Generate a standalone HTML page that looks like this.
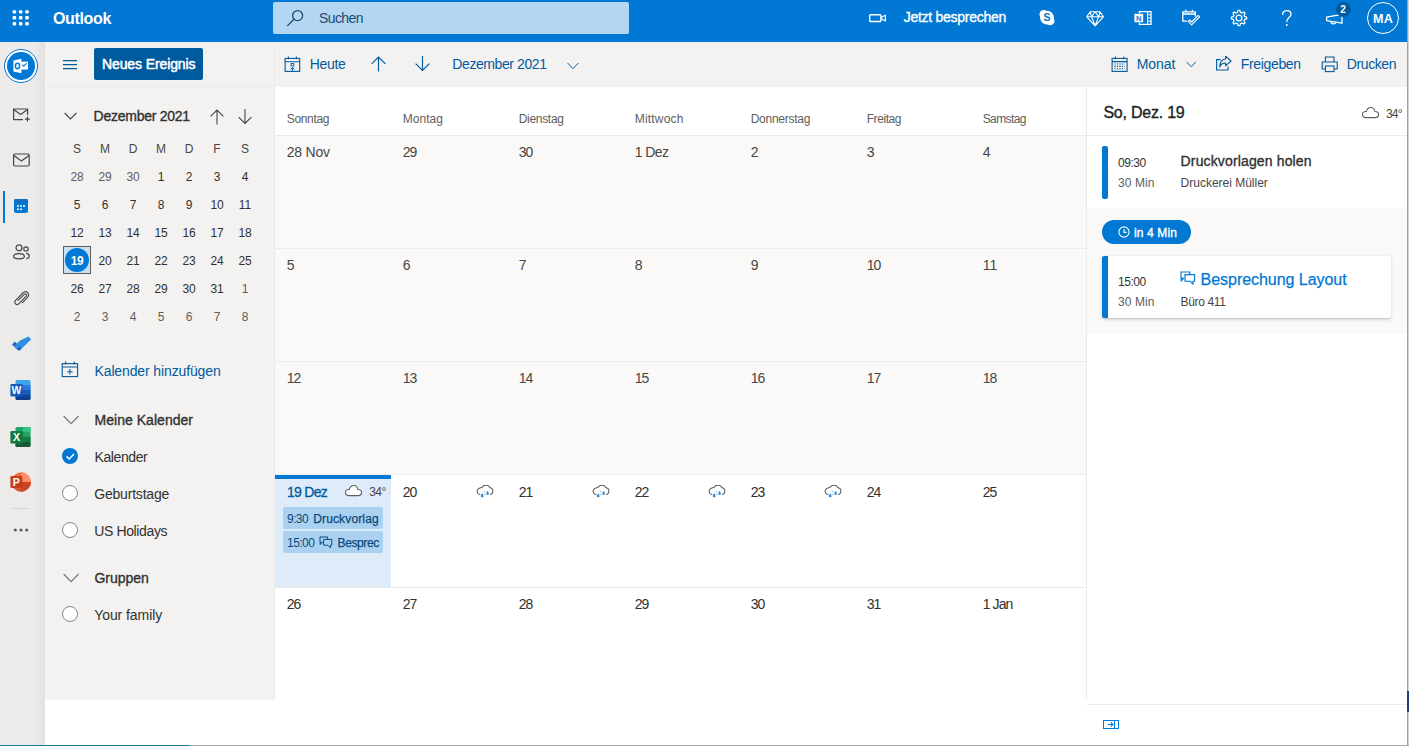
<!DOCTYPE html>
<html lang="de"><head><meta charset="utf-8"><title>Kalender - Outlook</title>
<style>
*{box-sizing:border-box;margin:0;padding:0}
html,body{width:1409px;height:746px;overflow:hidden;background:#fff}
body{font-family:"Liberation Sans",sans-serif;position:relative;color:#323130}
.a{position:absolute}
.t{position:absolute;white-space:nowrap;line-height:20px}
.sb{-webkit-text-stroke:0.35px currentColor}
svg{position:absolute;overflow:visible}
</style></head>
<body>
<div class="a" style="left:0px;top:0px;width:1407px;height:42px;background:#0078d4;"></div>
<div class="a" style="left:0px;top:42px;width:45px;height:703px;background:#edebe9;"></div>
<div class="a" style="left:35px;top:42px;width:10px;height:703px;background:linear-gradient(to right,rgba(0,0,0,0),rgba(0,0,0,0.045))"></div>
<div class="a" style="left:45px;top:42px;width:230px;height:658px;background:#f3f2f1;"></div>
<div class="a" style="left:275px;top:42px;width:1132px;height:45px;background:#f3f2f1;"></div>
<div class="a" style="left:46px;top:86px;width:229px;height:1px;background:#edebe9;"></div>
<div class="a" style="left:274px;top:42px;width:1px;height:658px;background:#edebe9;"></div>
<div class="a" style="left:1407px;top:0px;width:1px;height:746px;background:#a0a0a0;"></div>
<div class="a" style="left:1408px;top:0px;width:1px;height:746px;background:#d2d2d2;"></div>
<div class="a" style="left:0px;top:745px;width:1409px;height:1px;background:#a6a6a6;"></div>
<div class="a" style="left:0px;top:745px;width:190px;height:1px;background:#1a7aa3;"></div>
<div class="a" style="left:1407px;top:691px;width:2px;height:21px;background:#1f3f7a;"></div>
<svg style="left:0px;top:0px" width="46" height="42" viewBox="0 0 46 42"><rect x="12.6" y="10.2" width="3.6" height="3.4" rx="1" fill="#fff"/><rect x="18.9" y="10.2" width="3.6" height="3.4" rx="1" fill="#fff"/><rect x="25.2" y="10.2" width="3.6" height="3.4" rx="1" fill="#fff"/><rect x="12.6" y="16.1" width="3.6" height="3.4" rx="1" fill="#fff"/><rect x="18.9" y="16.1" width="3.6" height="3.4" rx="1" fill="#fff"/><rect x="25.2" y="16.1" width="3.6" height="3.4" rx="1" fill="#fff"/><rect x="12.6" y="22.0" width="3.6" height="3.4" rx="1" fill="#fff"/><rect x="18.9" y="22.0" width="3.6" height="3.4" rx="1" fill="#fff"/><rect x="25.2" y="22.0" width="3.6" height="3.4" rx="1" fill="#fff"/></svg>
<div class="t" style="left:53px;top:9px;font-size:16px;color:#fff;font-weight:bold;letter-spacing:-0.343px;">Outlook</div>
<div class="a" style="left:273px;top:2px;width:356px;height:32px;background:#b3d6f2;border-radius:2px"></div>
<svg style="left:285px;top:8px" width="20" height="20" viewBox="0 0 20 20"><circle cx="12.6" cy="7.6" r="5" fill="none" stroke="#1f4a75" stroke-width="1.3"/><path d="M9 11.3 L2.6 17.6" stroke="#1f4a75" stroke-width="1.3" fill="none" stroke-linecap="round"/></svg>
<div class="t" style="left:319.1px;top:8px;font-size:14px;color:#1f4a75;letter-spacing:-0.633px;">Suchen</div>
<svg style="left:868px;top:12px" width="20" height="12" viewBox="0 0 20 12"><rect x="1.7" y="2.7" width="11.2" height="6.8" rx="0.8" fill="none" stroke="#fff" stroke-width="1.4"/><path d="M13.6 5.2 L17.4 3.2 L17.4 9 L13.6 7 Z" fill="none" stroke="#fff" stroke-width="1.2" stroke-linejoin="round"/></svg>
<div class="t sb" style="left:903.7px;top:7px;font-size:14px;color:#fff;letter-spacing:-0.273px;">Jetzt besprechen</div>
<svg style="left:1037px;top:8px" width="20" height="20" viewBox="0 0 20 20"><circle cx="10" cy="9.6" r="6.9" fill="#fff"/><circle cx="6.9" cy="6.3" r="4.4" fill="#fff"/><circle cx="13.1" cy="12.9" r="4.4" fill="#fff"/><text x="10" y="13.4" font-family="Liberation Sans" font-weight="bold" font-size="10.5" fill="#0078d4" text-anchor="middle">S</text></svg>
<svg style="left:1086px;top:10px" width="18" height="17" viewBox="0 0 18 17"><path d="M4.2 1.8 L14 1.8 L17.4 6.8 L9.1 15.8 L0.8 6.8 Z M0.8 6.8 H17.4 M5.6 6.8 L9.1 15.8 L12.6 6.8 M4.2 1.8 L5.6 6.8 M14 1.8 L12.6 6.8 M9.1 1.8 L5.6 6.8 M9.1 1.8 L12.6 6.8" fill="none" stroke="#fff" stroke-width="1.1" stroke-linejoin="round"/></svg>
<svg style="left:1133px;top:9px" width="20" height="18" viewBox="0 0 20 18"><path d="M6.4 4.6 V2.6 H18 V15.4 H6.4 V13.4" fill="none" stroke="#fff" stroke-width="1.3"/><path d="M14.6 2.6 V15.4 M14.6 5.8 H18 M14.6 9 H18 M14.6 12.2 H18" stroke="#fff" stroke-width="1.1" fill="none"/><rect x="1.4" y="4.8" width="8.8" height="8.4" fill="#fff"/><text x="5.8" y="11.9" font-family="Liberation Sans" font-weight="bold" font-size="7.6" fill="#0078d4" text-anchor="middle">N</text></svg>
<svg style="left:1182px;top:9px" width="20" height="18" viewBox="0 0 20 18"><path d="M13.4 7.6 V2.8 H0.8 V12.2 H5" fill="none" stroke="#fff" stroke-width="1.3" stroke-linejoin="round"/><path d="M0.8 5 H13.4 M3.8 0.8 V3 M10.4 0.8 V3" stroke="#fff" stroke-width="1.3" fill="none"/><path d="M6.2 12.4 L9.6 15.8 L17.6 7.8 L16.2 6.4 L9.6 13 L7.6 11 Z" fill="none" stroke="#fff" stroke-width="1.1" stroke-linejoin="round"/></svg>
<svg style="left:1229px;top:8px" width="20" height="20" viewBox="0 0 20 20"><path d="M9.03 2.36 L10.97 2.36 L11.40 4.37 L12.99 5.03 L14.72 3.92 L16.08 5.28 L14.97 7.01 L15.63 8.60 L17.64 9.03 L17.64 10.97 L15.63 11.40 L14.97 12.99 L16.08 14.72 L14.72 16.08 L12.99 14.97 L11.40 15.63 L10.97 17.64 L9.03 17.64 L8.60 15.63 L7.01 14.97 L5.28 16.08 L3.92 14.72 L5.03 12.99 L4.37 11.40 L2.36 10.97 L2.36 9.03 L4.37 8.60 L5.03 7.01 L3.92 5.28 L5.28 3.92 L7.01 5.03 L8.60 4.37 Z" fill="none" stroke="#fff" stroke-width="1.25" stroke-linejoin="round"/><circle cx="10" cy="10" r="2.9" fill="none" stroke="#fff" stroke-width="1.25"/></svg>
<svg style="left:1280px;top:8px" width="14" height="20" viewBox="0 0 14 20"><path d="M2.6 6.4 C2.6 3.6 4.6 2.6 6.8 2.6 C9.2 2.6 11 4 11 6.2 C11 9.4 6.8 9.6 6.8 13.6" fill="none" stroke="#fff" stroke-width="1.35" stroke-linecap="round"/><circle cx="6.8" cy="17" r="0.95" fill="#fff"/></svg>
<svg style="left:1325px;top:12px" width="22" height="14" viewBox="0 0 22 14"><path d="M1.6 5.2 L17 2.4 L17 11.2 L1.6 8.6 Z" fill="none" stroke="#fff" stroke-width="1.3" stroke-linejoin="round"/><path d="M6 9.4 C6 12.4 10.6 12.6 10.8 10.2" fill="none" stroke="#fff" stroke-width="1.3"/></svg>
<div class="a" style="left:1335.6px;top:1.8px;width:15px;height:15px;border-radius:50%;background:#005a9e"></div>
<div class="t" style="left:1243.1px;width:200px;text-align:center;top:0px;font-size:10px;color:#fff;font-weight:bold;">2</div>
<div class="a" style="left:1367px;top:2px;width:32px;height:32px;border-radius:50%;border:1.5px solid #fff"></div>
<div class="t" style="left:1283px;width:200px;text-align:center;top:9px;font-size:12.6px;color:#fff;font-weight:bold;letter-spacing:0.2px;">MA</div>
<div class="a" style="left:4px;top:49px;width:34px;height:34px;border-radius:50%;border:1.5px solid #0078d4;background:#fff"></div>
<div class="a" style="left:7px;top:52px;width:28px;height:28px;border-radius:50%;background:#0078d4"></div>
<svg style="left:11px;top:56px" width="20" height="20" viewBox="0 0 20 20"><path d="M9.6 5.6 H17 V13.6 H9.6 Z" fill="#fff"/><path d="M11.2 8.6 L12.8 10.2 L15.8 7.2" fill="none" stroke="#0078d4" stroke-width="1.1"/><path d="M2.4 4.4 L10.4 2.8 V17.2 L2.4 15.6 Z" fill="#fff"/><ellipse cx="6.5" cy="10" rx="2.1" ry="2.7" fill="none" stroke="#0078d4" stroke-width="1.5"/></svg>
<svg style="left:12px;top:106px" width="20" height="18" viewBox="0 0 20 18"><path d="M15.6 9 V3 H1.6 V13.6 H11" fill="none" stroke="#484644" stroke-width="1.2" stroke-linejoin="round"/><path d="M1.6 3.6 L8.6 8.6 L15.6 3.6" fill="none" stroke="#484644" stroke-width="1.2"/><path d="M15.4 10.6 V15.6 M12.9 13.1 H17.9" stroke="#484644" stroke-width="1.2" fill="none"/></svg>
<svg style="left:12px;top:152px" width="20" height="16" viewBox="0 0 20 16"><rect x="1.6" y="2" width="15.6" height="12" rx="1.2" fill="none" stroke="#484644" stroke-width="1.2"/><path d="M1.8 3.4 L9.4 9 L17 3.4" fill="none" stroke="#484644" stroke-width="1.2"/></svg>
<div class="a" style="left:3px;top:191px;width:2px;height:32px;background:#0078d4;"></div>
<svg style="left:13px;top:198px" width="16" height="16" viewBox="0 0 16 16"><rect x="1" y="1" width="14" height="14" rx="2" fill="#0078d4"/><rect x="1" y="1" width="14" height="3.6" rx="1.6" fill="#106ebe"/><g fill="#fff"><circle cx="5" cy="8" r="1"/><circle cx="8" cy="8" r="1"/><circle cx="11" cy="8" r="1"/><circle cx="5" cy="11.2" r="1"/><circle cx="8" cy="11.2" r="1"/></g></svg>
<svg style="left:12px;top:243px" width="20" height="18" viewBox="0 0 20 18"><circle cx="7" cy="4.8" r="3" fill="none" stroke="#484644" stroke-width="1.2"/><path d="M1.6 13.6 C1.6 9.6 12.4 9.6 12.4 13.6 C12.4 16.6 1.6 16.6 1.6 13.6 Z" fill="none" stroke="#484644" stroke-width="1.2"/><circle cx="14" cy="6" r="2.2" fill="none" stroke="#484644" stroke-width="1.2"/><path d="M14 10.4 C18 10.4 18.4 15.6 14.4 15.6" fill="none" stroke="#484644" stroke-width="1.2"/></svg>
<svg style="left:12px;top:289px" width="20" height="18" viewBox="0 0 20 18"><path d="M6.2 11.4 L12.2 5.4 C13.6 4 15.4 6 14.2 7.2 L7 14.6 C4.6 17 1.2 13.8 3.6 11.4 L10.8 4 C14.4 0.6 18.8 5.2 15.6 8.4 L10.4 13.6" fill="none" stroke="#484644" stroke-width="1.15" stroke-linecap="round"/></svg>
<svg style="left:11px;top:335px" width="22" height="18" viewBox="0 0 22 18"><path d="M1 9.4 L3.8 6.6 L8.6 11.4 L5.8 14.2 Z" fill="#2b62c6"/><path d="M5.8 14.2 L3 11.4 L8.6 5.8 L17.4 1.4 L20.2 4.2 L8.6 15.8 Z" fill="#2f8fe4"/><path d="M5.8 14.2 L8.6 11.4 L10.2 13 L8.6 15.8 Z" fill="#1e5fc0"/></svg>
<svg style="left:10px;top:379px" width="21" height="22" viewBox="0 0 21 22"><rect x="5.5" y="1" width="15" height="20" rx="1.6" fill="#41a5ee"/><rect x="5.5" y="6" width="15" height="5" fill="#2b7cd3"/><rect x="5.5" y="11" width="15" height="5" fill="#185abd"/><path d="M5.5 16 H20.5 V19.4 A1.6 1.6 0 0 1 18.9 21 H7.1 A1.6 1.6 0 0 1 5.5 19.4Z" fill="#103f91"/><rect x="0.4" y="5" width="12.4" height="12.4" rx="1.2" fill="#185abd"/><text x="6.5" y="14.9" font-family="Liberation Sans" font-weight="bold" font-size="10.4" fill="#fff" text-anchor="middle">W</text></svg>
<svg style="left:10px;top:426px" width="21" height="22" viewBox="0 0 21 22"><rect x="5.5" y="1" width="15" height="20" rx="1.6" fill="#21a366"/><rect x="13" y="1" width="7.5" height="5" fill="#33c481"/><rect x="5.5" y="6" width="7.5" height="5" fill="#107c41"/><rect x="13" y="11" width="7.5" height="5" fill="#107c41"/><path d="M5.5 16 H20.5 V19.4 A1.6 1.6 0 0 1 18.9 21 H7.1 A1.6 1.6 0 0 1 5.5 19.4Z" fill="#185c37"/><rect x="0.4" y="5" width="12.4" height="12.4" rx="1.2" fill="#107c41"/><text x="6.5" y="15" font-family="Liberation Sans" font-weight="bold" font-size="10.8" fill="#fff" text-anchor="middle">X</text></svg>
<svg style="left:10px;top:472px" width="22" height="22" viewBox="0 0 22 22"><circle cx="11.2" cy="10" r="9.7" fill="#ed6c47"/><path d="M11.2 0.3 A9.7 9.7 0 0 1 20.9 10 H11.2 Z" fill="#ff8f6b"/><path d="M1.5 10 A9.7 9.7 0 0 0 20.9 10 Z" fill="#d35230"/><path d="M11.2 10 H20.9 A9.7 9.7 0 0 1 11.2 19.7 Z" fill="#c43e1c" opacity="0.55"/><rect x="0.4" y="4" width="12" height="12" rx="1.2" fill="#c43e1c"/><text x="6.4" y="13.9" font-family="Liberation Sans" font-weight="bold" font-size="10.6" fill="#fff" text-anchor="middle">P</text></svg>
<div class="a" style="left:13px;top:508px;width:16px;height:1px;background:#d2d0ce;"></div>
<svg style="left:12px;top:525.5px" width="20" height="8" viewBox="0 0 20 8"><circle cx="3.3" cy="4" r="1.55" fill="#605e5c"/><circle cx="9" cy="4" r="1.55" fill="#605e5c"/><circle cx="14.7" cy="4" r="1.55" fill="#605e5c"/></svg>
<svg style="left:62px;top:58px" width="18" height="14" viewBox="0 0 18 14"><path d="M1 2.6 H15 M1 6.6 H15 M1 10.6 H15" stroke="#005a9e" stroke-width="1.1" fill="none"/></svg>
<div class="a" style="left:94px;top:48px;width:109px;height:32px;background:#005a9e;border-radius:2px"></div>
<div class="t" style="left:102px;top:54px;font-size:14px;color:#fff;-webkit-text-stroke:0.5px #fff;letter-spacing:-0.109px;">Neues Ereignis</div>
<svg style="left:63.5px;top:112px" width="13" height="9" viewBox="0 0 13 9"><path d="M0.6 1 L6.5 7 L12.4 1" fill="none" stroke="#484644" stroke-width="1.1"/></svg>
<div class="t sb" style="left:93.6px;top:106px;font-size:14px;color:#323130;letter-spacing:-0.258px;">Dezember 2021</div>
<svg style="left:210.0px;top:108.5px" width="14" height="15.5" viewBox="0 0 14 15.5"><path d="M7.0 15.5 V1 M0.6 7.4 L7.0 1 L13.4 7.4" fill="none" stroke="#484644" stroke-width="1.1"/></svg>
<svg style="left:237.7px;top:108.5px" width="14" height="15.5" viewBox="0 0 14 15.5"><path d="M7.0 0 V14.5 M0.6 8.1 L7.0 14.5 L13.4 8.1" fill="none" stroke="#484644" stroke-width="1.1"/></svg>
<div class="t" style="left:-23px;width:200px;text-align:center;top:139px;font-size:12px;color:#484644;">S</div>
<div class="t" style="left:5px;width:200px;text-align:center;top:139px;font-size:12px;color:#484644;">M</div>
<div class="t" style="left:33px;width:200px;text-align:center;top:139px;font-size:12px;color:#484644;">D</div>
<div class="t" style="left:61px;width:200px;text-align:center;top:139px;font-size:12px;color:#484644;">M</div>
<div class="t" style="left:89px;width:200px;text-align:center;top:139px;font-size:12px;color:#484644;">D</div>
<div class="t" style="left:117px;width:200px;text-align:center;top:139px;font-size:12px;color:#484644;">F</div>
<div class="t" style="left:145px;width:200px;text-align:center;top:139px;font-size:12px;color:#484644;">S</div>
<div class="t" style="left:-23px;width:200px;text-align:center;top:167px;font-size:12px;color:#605e5c;letter-spacing:-0.1px;">28</div>
<div class="t" style="left:5px;width:200px;text-align:center;top:167px;font-size:12px;color:#605e5c;letter-spacing:-0.1px;">29</div>
<div class="t" style="left:33px;width:200px;text-align:center;top:167px;font-size:12px;color:#605e5c;letter-spacing:-0.1px;">30</div>
<div class="t" style="left:61px;width:200px;text-align:center;top:167px;font-size:12px;color:#323130;letter-spacing:-0.1px;">1</div>
<div class="t" style="left:89px;width:200px;text-align:center;top:167px;font-size:12px;color:#323130;letter-spacing:-0.1px;">2</div>
<div class="t" style="left:117px;width:200px;text-align:center;top:167px;font-size:12px;color:#323130;letter-spacing:-0.1px;">3</div>
<div class="t" style="left:145px;width:200px;text-align:center;top:167px;font-size:12px;color:#323130;letter-spacing:-0.1px;">4</div>
<div class="t" style="left:-23px;width:200px;text-align:center;top:195px;font-size:12px;color:#323130;letter-spacing:-0.1px;">5</div>
<div class="t" style="left:5px;width:200px;text-align:center;top:195px;font-size:12px;color:#323130;letter-spacing:-0.1px;">6</div>
<div class="t" style="left:33px;width:200px;text-align:center;top:195px;font-size:12px;color:#323130;letter-spacing:-0.1px;">7</div>
<div class="t" style="left:61px;width:200px;text-align:center;top:195px;font-size:12px;color:#323130;letter-spacing:-0.1px;">8</div>
<div class="t" style="left:89px;width:200px;text-align:center;top:195px;font-size:12px;color:#323130;letter-spacing:-0.1px;">9</div>
<div class="t" style="left:117px;width:200px;text-align:center;top:195px;font-size:12px;color:#323130;letter-spacing:-0.1px;">10</div>
<div class="t" style="left:145px;width:200px;text-align:center;top:195px;font-size:12px;color:#323130;letter-spacing:-0.1px;">11</div>
<div class="t" style="left:-23px;width:200px;text-align:center;top:223px;font-size:12px;color:#323130;letter-spacing:-0.1px;">12</div>
<div class="t" style="left:5px;width:200px;text-align:center;top:223px;font-size:12px;color:#323130;letter-spacing:-0.1px;">13</div>
<div class="t" style="left:33px;width:200px;text-align:center;top:223px;font-size:12px;color:#323130;letter-spacing:-0.1px;">14</div>
<div class="t" style="left:61px;width:200px;text-align:center;top:223px;font-size:12px;color:#323130;letter-spacing:-0.1px;">15</div>
<div class="t" style="left:89px;width:200px;text-align:center;top:223px;font-size:12px;color:#323130;letter-spacing:-0.1px;">16</div>
<div class="t" style="left:117px;width:200px;text-align:center;top:223px;font-size:12px;color:#323130;letter-spacing:-0.1px;">17</div>
<div class="t" style="left:145px;width:200px;text-align:center;top:223px;font-size:12px;color:#323130;letter-spacing:-0.1px;">18</div>
<div class="a" style="left:63px;top:246px;width:28px;height:28px;background:#c7e0f4;border:1px solid #605e5c"></div>
<div class="a" style="left:65px;top:248px;width:24px;height:24px;border-radius:50%;background:#0078d4"></div>
<div class="t" style="left:-23px;width:200px;text-align:center;top:251px;font-size:12px;color:#fff;font-weight:bold;letter-spacing:-0.4px;">19</div>
<div class="t" style="left:5px;width:200px;text-align:center;top:251px;font-size:12px;color:#323130;letter-spacing:-0.1px;">20</div>
<div class="t" style="left:33px;width:200px;text-align:center;top:251px;font-size:12px;color:#323130;letter-spacing:-0.1px;">21</div>
<div class="t" style="left:61px;width:200px;text-align:center;top:251px;font-size:12px;color:#323130;letter-spacing:-0.1px;">22</div>
<div class="t" style="left:89px;width:200px;text-align:center;top:251px;font-size:12px;color:#323130;letter-spacing:-0.1px;">23</div>
<div class="t" style="left:117px;width:200px;text-align:center;top:251px;font-size:12px;color:#323130;letter-spacing:-0.1px;">24</div>
<div class="t" style="left:145px;width:200px;text-align:center;top:251px;font-size:12px;color:#323130;letter-spacing:-0.1px;">25</div>
<div class="t" style="left:-23px;width:200px;text-align:center;top:279px;font-size:12px;color:#323130;letter-spacing:-0.1px;">26</div>
<div class="t" style="left:5px;width:200px;text-align:center;top:279px;font-size:12px;color:#323130;letter-spacing:-0.1px;">27</div>
<div class="t" style="left:33px;width:200px;text-align:center;top:279px;font-size:12px;color:#323130;letter-spacing:-0.1px;">28</div>
<div class="t" style="left:61px;width:200px;text-align:center;top:279px;font-size:12px;color:#323130;letter-spacing:-0.1px;">29</div>
<div class="t" style="left:89px;width:200px;text-align:center;top:279px;font-size:12px;color:#323130;letter-spacing:-0.1px;">30</div>
<div class="t" style="left:117px;width:200px;text-align:center;top:279px;font-size:12px;color:#323130;letter-spacing:-0.1px;">31</div>
<div class="t" style="left:145px;width:200px;text-align:center;top:279px;font-size:12px;color:#605e5c;letter-spacing:-0.1px;">1</div>
<div class="t" style="left:-23px;width:200px;text-align:center;top:307px;font-size:12px;color:#605e5c;letter-spacing:-0.1px;">2</div>
<div class="t" style="left:5px;width:200px;text-align:center;top:307px;font-size:12px;color:#605e5c;letter-spacing:-0.1px;">3</div>
<div class="t" style="left:33px;width:200px;text-align:center;top:307px;font-size:12px;color:#605e5c;letter-spacing:-0.1px;">4</div>
<div class="t" style="left:61px;width:200px;text-align:center;top:307px;font-size:12px;color:#605e5c;letter-spacing:-0.1px;">5</div>
<div class="t" style="left:89px;width:200px;text-align:center;top:307px;font-size:12px;color:#605e5c;letter-spacing:-0.1px;">6</div>
<div class="t" style="left:117px;width:200px;text-align:center;top:307px;font-size:12px;color:#605e5c;letter-spacing:-0.1px;">7</div>
<div class="t" style="left:145px;width:200px;text-align:center;top:307px;font-size:12px;color:#605e5c;letter-spacing:-0.1px;">8</div>
<svg style="left:61px;top:361px" width="18" height="17" viewBox="0 0 18 17"><rect x="1.2" y="2.6" width="15.4" height="13" fill="none" stroke="#005a9e" stroke-width="1.1"/><path d="M1.2 6 H16.6 M4.6 0.6 V3.4 M13.2 0.6 V3.4 M8.9 8 V13.6 M6.1 10.8 H11.7" stroke="#005a9e" stroke-width="1.1" fill="none"/></svg>
<div class="t" style="left:94.5px;top:361px;font-size:14px;color:#005a9e;letter-spacing:-0.123px;">Kalender hinzufügen</div>
<svg style="left:62.8px;top:414.8px" width="16.2" height="10.6" viewBox="0 0 16.2 10.6"><path d="M0.6 1 L8.1 8.6 L15.6 1" fill="none" stroke="#797775" stroke-width="1.2"/></svg>
<div class="t sb" style="left:94.5px;top:410px;font-size:14px;color:#323130;letter-spacing:0.035px;">Meine Kalender</div>
<div class="a" style="left:62px;top:448px;width:16.4px;height:16.4px;border-radius:50%;background:#0078d4"></div>
<svg style="left:62px;top:448px" width="17" height="17" viewBox="0 0 17 17"><path d="M4.6 8.4 L7.2 11 L12 6" fill="none" stroke="#fff" stroke-width="1.5"/></svg>
<div class="t" style="left:94.5px;top:447px;font-size:14px;color:#323130;letter-spacing:-0.403px;">Kalender</div>
<div class="a" style="left:62px;top:485px;width:16px;height:16px;border-radius:50%;background:#fff;border:1px solid #8a8886"></div>
<div class="t" style="left:94.2px;top:484px;font-size:14px;color:#323130;letter-spacing:-0.193px;">Geburtstage</div>
<div class="a" style="left:62px;top:522.4px;width:16px;height:16px;border-radius:50%;background:#fff;border:1px solid #8a8886"></div>
<div class="t" style="left:94.2px;top:521px;font-size:14px;color:#323130;letter-spacing:-0.371px;">US Holidays</div>
<svg style="left:62.8px;top:573.3px" width="16.2" height="10.6" viewBox="0 0 16.2 10.6"><path d="M0.6 1 L8.1 8.6 L15.6 1" fill="none" stroke="#797775" stroke-width="1.2"/></svg>
<div class="t sb" style="left:94.5px;top:568px;font-size:14px;color:#323130;letter-spacing:-0.044px;">Gruppen</div>
<div class="a" style="left:62px;top:606px;width:16px;height:16px;border-radius:50%;background:#fff;border:1px solid #8a8886"></div>
<div class="t" style="left:94.2px;top:605px;font-size:14px;color:#323130;letter-spacing:-0.072px;">Your family</div>
<svg style="left:284px;top:55.5px" width="17" height="17" viewBox="0 0 17 17"><rect x="1.1" y="2.4" width="14.6" height="13" fill="none" stroke="#005a9e" stroke-width="1.1"/><path d="M1.1 5.8 H15.7 M4.4 0.6 V3.2 M12.4 0.6 V3.2" stroke="#005a9e" stroke-width="1.1" fill="none"/><rect x="7" y="7.6" width="2.8" height="2.4" fill="none" stroke="#005a9e" stroke-width="0.9"/><path d="M8.4 15.4 V11.6 M6.4 13.4 L8.4 11.4 L10.4 13.4" stroke="#005a9e" stroke-width="1" fill="none"/></svg>
<div class="t" style="left:309.8px;top:54px;font-size:14px;color:#005a9e;letter-spacing:-0.360px;">Heute</div>
<svg style="left:371.1px;top:56px" width="15" height="15.5" viewBox="0 0 15 15.5"><path d="M7.5 15.5 V1 M0.6 7.9 L7.5 1 L14.4 7.9" fill="none" stroke="#005a9e" stroke-width="1.15"/></svg>
<svg style="left:415.0px;top:56px" width="15" height="15.5" viewBox="0 0 15 15.5"><path d="M7.5 0 V14.5 M0.6 7.6 L7.5 14.5 L14.4 7.6" fill="none" stroke="#005a9e" stroke-width="1.15"/></svg>
<div class="t" style="left:452.3px;top:54px;font-size:14px;color:#005a9e;letter-spacing:-0.408px;">Dezember 2021</div>
<svg style="left:567px;top:61.9px" width="12" height="8.6" viewBox="0 0 12 8.6"><path d="M0.6 1 L6.0 6.6 L11.4 1" fill="none" stroke="#005a9e" stroke-width="1.0"/></svg>
<svg style="left:1111px;top:55.5px" width="18" height="17" viewBox="0 0 18 17"><rect x="1.1" y="2.4" width="15" height="13" fill="none" stroke="#005a9e" stroke-width="1.1"/><path d="M1.1 5.6 H16.1 M4.4 0.6 V3.2 M12.8 0.6 V3.2" stroke="#005a9e" stroke-width="1.1" fill="none"/><path d="M3.4 8 H13.8 M3.4 10.4 H13.8 M3.4 12.8 H13.8" stroke="#005a9e" stroke-width="1.1" stroke-dasharray="1.3 1.2" fill="none"/></svg>
<div class="t" style="left:1136.7px;top:54px;font-size:14px;color:#005a9e;letter-spacing:-0.023px;">Monat</div>
<svg style="left:1185.5px;top:60.7px" width="10.4" height="7.8" viewBox="0 0 10.4 7.8"><path d="M0.6 1 L5.2 5.8 L9.8 1" fill="none" stroke="#005a9e" stroke-width="1.0"/></svg>
<svg style="left:1215px;top:55px" width="18" height="17" viewBox="0 0 18 17"><path d="M5.6 4.6 H1.6 V15 H13 V11.6" fill="none" stroke="#005a9e" stroke-width="1.1"/><path d="M10.6 1.2 L16 6 L10.6 10.8 V8 C7.4 8 5.6 9.6 4.8 12 C4.8 7.6 7 4.4 10.6 4 Z" fill="none" stroke="#005a9e" stroke-width="1.1" stroke-linejoin="round"/></svg>
<div class="t" style="left:1240.7px;top:54px;font-size:14px;color:#005a9e;letter-spacing:-0.328px;">Freigeben</div>
<svg style="left:1321px;top:55.5px" width="18" height="17" viewBox="0 0 18 17"><path d="M4.4 6 V1 H13 V6" fill="none" stroke="#005a9e" stroke-width="1.1"/><path d="M4.4 13 H1.2 V6 H16.2 V13 H13" fill="none" stroke="#005a9e" stroke-width="1.1"/><rect x="4.4" y="10" width="8.6" height="5.6" fill="none" stroke="#005a9e" stroke-width="1.1"/></svg>
<div class="t" style="left:1346.8px;top:54px;font-size:14px;color:#005a9e;letter-spacing:-0.402px;">Drucken</div>
<div class="a" style="left:275px;top:136px;width:812px;height:339px;background:#faf9f8;"></div>
<div class="a" style="left:275px;top:135px;width:812px;height:1px;background:#edebe9;"></div>
<div class="a" style="left:275px;top:248px;width:812px;height:1px;background:#edebe9;"></div>
<div class="a" style="left:275px;top:361px;width:812px;height:1px;background:#edebe9;"></div>
<div class="a" style="left:275px;top:474px;width:812px;height:1px;background:#edebe9;"></div>
<div class="a" style="left:275px;top:587px;width:812px;height:1px;background:#edebe9;"></div>
<div class="a" style="left:1086px;top:87px;width:1px;height:613px;background:#edebe9;"></div>
<div class="t" style="left:286.7px;top:109px;font-size:12px;color:#605e5c;letter-spacing:-0.308px;">Sonntag</div>
<div class="t" style="left:402.7px;top:109px;font-size:12px;color:#605e5c;letter-spacing:0.047px;">Montag</div>
<div class="t" style="left:518.7px;top:109px;font-size:12px;color:#605e5c;letter-spacing:-0.300px;">Dienstag</div>
<div class="t" style="left:634.7px;top:109px;font-size:12px;color:#605e5c;letter-spacing:0.202px;">Mittwoch</div>
<div class="t" style="left:750.7px;top:109px;font-size:12px;color:#605e5c;letter-spacing:-0.253px;">Donnerstag</div>
<div class="t" style="left:866.7px;top:109px;font-size:12px;color:#605e5c;letter-spacing:-0.431px;">Freitag</div>
<div class="t" style="left:982.7px;top:109px;font-size:12px;color:#605e5c;letter-spacing:-0.599px;">Samstag</div>
<div class="a" style="left:275px;top:475px;width:116px;height:112px;background:#deecf9;"></div>
<div class="a" style="left:275px;top:475px;width:116px;height:4px;background:#0078d4;"></div>
<div class="t" style="left:286.7px;top:142px;font-size:14px;color:#484644;letter-spacing:-0.188px;">28 Nov</div>
<div class="t" style="left:402.7px;top:142px;font-size:14px;color:#484644;letter-spacing:-0.952px;">29</div>
<div class="t" style="left:518.7px;top:142px;font-size:14px;color:#484644;letter-spacing:-0.952px;">30</div>
<div class="t" style="left:634.7px;top:142px;font-size:14px;color:#484644;letter-spacing:-0.588px;">1 Dez</div>
<div class="t" style="left:750.7px;top:142px;font-size:14px;color:#484644;">2</div>
<div class="t" style="left:866.7px;top:142px;font-size:14px;color:#484644;">3</div>
<div class="t" style="left:982.7px;top:142px;font-size:14px;color:#484644;">4</div>
<div class="t" style="left:286.7px;top:255px;font-size:14px;color:#484644;">5</div>
<div class="t" style="left:402.7px;top:255px;font-size:14px;color:#484644;">6</div>
<div class="t" style="left:518.7px;top:255px;font-size:14px;color:#484644;">7</div>
<div class="t" style="left:634.7px;top:255px;font-size:14px;color:#484644;">8</div>
<div class="t" style="left:750.7px;top:255px;font-size:14px;color:#484644;">9</div>
<div class="t" style="left:866.7px;top:255px;font-size:14px;color:#484644;letter-spacing:-0.952px;">10</div>
<div class="t" style="left:982.7px;top:255px;font-size:14px;color:#484644;letter-spacing:0.087px;">11</div>
<div class="t" style="left:286.7px;top:368px;font-size:14px;color:#484644;letter-spacing:-0.952px;">12</div>
<div class="t" style="left:402.7px;top:368px;font-size:14px;color:#484644;letter-spacing:-0.952px;">13</div>
<div class="t" style="left:518.7px;top:368px;font-size:14px;color:#484644;letter-spacing:-0.952px;">14</div>
<div class="t" style="left:634.7px;top:368px;font-size:14px;color:#484644;letter-spacing:-0.952px;">15</div>
<div class="t" style="left:750.7px;top:368px;font-size:14px;color:#484644;letter-spacing:-0.952px;">16</div>
<div class="t" style="left:866.7px;top:368px;font-size:14px;color:#484644;letter-spacing:-0.952px;">17</div>
<div class="t" style="left:982.7px;top:368px;font-size:14px;color:#484644;letter-spacing:-0.952px;">18</div>
<div class="t" style="left:287px;top:482px;font-size:14px;color:#005a9e;-webkit-text-stroke:0.3px #005a9e;letter-spacing:-0.728px;">19 Dez</div>
<div class="t" style="left:402.7px;top:482px;font-size:14px;color:#323130;letter-spacing:-0.952px;">20</div>
<div class="t" style="left:518.7px;top:482px;font-size:14px;color:#323130;letter-spacing:-0.952px;">21</div>
<div class="t" style="left:634.7px;top:482px;font-size:14px;color:#323130;letter-spacing:-0.952px;">22</div>
<div class="t" style="left:750.7px;top:482px;font-size:14px;color:#323130;letter-spacing:-0.952px;">23</div>
<div class="t" style="left:866.7px;top:482px;font-size:14px;color:#323130;letter-spacing:-0.952px;">24</div>
<div class="t" style="left:982.7px;top:482px;font-size:14px;color:#323130;letter-spacing:-0.952px;">25</div>
<div class="t" style="left:286.7px;top:594px;font-size:14px;color:#323130;letter-spacing:-0.952px;">26</div>
<div class="t" style="left:402.7px;top:594px;font-size:14px;color:#323130;letter-spacing:-0.952px;">27</div>
<div class="t" style="left:518.7px;top:594px;font-size:14px;color:#323130;letter-spacing:-0.952px;">28</div>
<div class="t" style="left:634.7px;top:594px;font-size:14px;color:#323130;letter-spacing:-0.952px;">29</div>
<div class="t" style="left:750.7px;top:594px;font-size:14px;color:#323130;letter-spacing:-0.952px;">30</div>
<div class="t" style="left:866.7px;top:594px;font-size:14px;color:#323130;letter-spacing:-0.952px;">31</div>
<div class="t" style="left:982.7px;top:594px;font-size:14px;color:#323130;letter-spacing:-0.882px;">1 Jan</div>
<svg style="left:344.9px;top:485px" width="18" height="12" viewBox="0 0 18 12"><path d="M3.8 10.6 C1.6 10.6 0.5 9 0.5 7.4 C0.5 5.6 2 4.4 3.6 4.4 C4 4.4 4.2 4.4 4.4 4.5 C5 2 6.8 0.5 8.8 0.5 C11 0.5 12.4 2.2 12.8 4.4 C15 4.4 16.6 5.8 16.6 7.6 C16.6 9.4 15.2 10.6 13.6 10.6 Z" fill="#fff" stroke="#605e5c" stroke-width="1.05" stroke-linejoin="round"/></svg>
<div class="t" style="left:369.2px;top:482px;font-size:12px;color:#484644;letter-spacing:-0.543px;">34°</div>
<svg style="left:477px;top:485px" width="18" height="13" viewBox="0 0 18 13"><path d="M3 9.6 C0.6 9.4 -0.2 7 0.3 5.6 C0.8 3.6 2.4 2.9 3.4 3 C3.9 2.3 4.6 2.2 5.2 2.3 C6 0.7 7.8 0.2 9.1 0.3 C11.2 0.4 12.6 1.6 12.9 2.8 C15 2.9 16.1 4.6 15.9 5.9 C15.8 7.8 14.6 9.2 13.4 9.4" fill="none" stroke="#605e5c" stroke-width="1.05" stroke-linecap="round"/><path d="M5.2 7.9 L6.4 10.4 A1.35 1.35 0 1 1 4 10.4 Z" fill="#2b88d8"/><path d="M10.6 5.7 L11.8 8.1 A1.3 1.3 0 1 1 9.4 8.1 Z" fill="#2b88d8"/><path d="M6.8 6.6 H8.4 M7.6 5.9 V7.3 M7.2 9.6 H8.6 M7.9 9 V10.2" stroke="#7bb7ea" stroke-width="0.7" fill="none"/></svg>
<svg style="left:593px;top:485px" width="18" height="13" viewBox="0 0 18 13"><path d="M3 9.6 C0.6 9.4 -0.2 7 0.3 5.6 C0.8 3.6 2.4 2.9 3.4 3 C3.9 2.3 4.6 2.2 5.2 2.3 C6 0.7 7.8 0.2 9.1 0.3 C11.2 0.4 12.6 1.6 12.9 2.8 C15 2.9 16.1 4.6 15.9 5.9 C15.8 7.8 14.6 9.2 13.4 9.4" fill="none" stroke="#605e5c" stroke-width="1.05" stroke-linecap="round"/><path d="M5.2 7.9 L6.4 10.4 A1.35 1.35 0 1 1 4 10.4 Z" fill="#2b88d8"/><path d="M10.6 5.7 L11.8 8.1 A1.3 1.3 0 1 1 9.4 8.1 Z" fill="#2b88d8"/><path d="M6.8 6.6 H8.4 M7.6 5.9 V7.3 M7.2 9.6 H8.6 M7.9 9 V10.2" stroke="#7bb7ea" stroke-width="0.7" fill="none"/></svg>
<svg style="left:709px;top:485px" width="18" height="13" viewBox="0 0 18 13"><path d="M3 9.6 C0.6 9.4 -0.2 7 0.3 5.6 C0.8 3.6 2.4 2.9 3.4 3 C3.9 2.3 4.6 2.2 5.2 2.3 C6 0.7 7.8 0.2 9.1 0.3 C11.2 0.4 12.6 1.6 12.9 2.8 C15 2.9 16.1 4.6 15.9 5.9 C15.8 7.8 14.6 9.2 13.4 9.4" fill="none" stroke="#605e5c" stroke-width="1.05" stroke-linecap="round"/><path d="M5.2 7.9 L6.4 10.4 A1.35 1.35 0 1 1 4 10.4 Z" fill="#2b88d8"/><path d="M10.6 5.7 L11.8 8.1 A1.3 1.3 0 1 1 9.4 8.1 Z" fill="#2b88d8"/><path d="M6.8 6.6 H8.4 M7.6 5.9 V7.3 M7.2 9.6 H8.6 M7.9 9 V10.2" stroke="#7bb7ea" stroke-width="0.7" fill="none"/></svg>
<svg style="left:825px;top:485px" width="18" height="13" viewBox="0 0 18 13"><path d="M3 9.6 C0.6 9.4 -0.2 7 0.3 5.6 C0.8 3.6 2.4 2.9 3.4 3 C3.9 2.3 4.6 2.2 5.2 2.3 C6 0.7 7.8 0.2 9.1 0.3 C11.2 0.4 12.6 1.6 12.9 2.8 C15 2.9 16.1 4.6 15.9 5.9 C15.8 7.8 14.6 9.2 13.4 9.4" fill="none" stroke="#605e5c" stroke-width="1.05" stroke-linecap="round"/><path d="M5.2 7.9 L6.4 10.4 A1.35 1.35 0 1 1 4 10.4 Z" fill="#2b88d8"/><path d="M10.6 5.7 L11.8 8.1 A1.3 1.3 0 1 1 9.4 8.1 Z" fill="#2b88d8"/><path d="M6.8 6.6 H8.4 M7.6 5.9 V7.3 M7.2 9.6 H8.6 M7.9 9 V10.2" stroke="#7bb7ea" stroke-width="0.7" fill="none"/></svg>
<div class="a" style="left:283px;top:507px;width:100px;height:22px;background:#abd1f0;border-radius:2px"></div>
<div class="a" style="left:283px;top:531px;width:100px;height:22px;background:#abd1f0;border-radius:2px"></div>
<div class="a" style="left:283px;top:507px;width:98px;height:22px;overflow:hidden">
<div class="t" style="left:4.1px;top:2px;font-size:12px;color:#0b4a7d;letter-spacing:-0.632px;">9:30</div>
<div class="t" style="left:30.2px;top:2px;font-size:12px;color:#0b4a7d;-webkit-text-stroke:0.25px #0b4a7d;letter-spacing:0.144px;">Druckvorlag</div>
</div>
<div class="a" style="left:283px;top:531px;width:98px;height:22px;overflow:hidden">
<div class="t" style="left:4.1px;top:2px;font-size:12px;color:#0b4a7d;letter-spacing:-0.567px;">15:00</div>
<svg style="left:35.6px;top:4.6px" width="14" height="13" viewBox="0 0 14 13"><path d="M3.2 6.2 H1 V1 H8.6 V3" fill="none" stroke="#0b4a7d" stroke-width="1"/><path d="M1.2 6.2 L1.2 8.6 L3.6 6.2" fill="none" stroke="#0b4a7d" stroke-width="1"/><path d="M4.6 3.4 H12.8 V9.2 H11.4 V11.8 L8.8 9.2 H4.6 Z" fill="none" stroke="#0b4a7d" stroke-width="1" stroke-linejoin="round"/></svg>
<div class="t" style="left:54.6px;top:2px;font-size:12px;color:#0b4a7d;-webkit-text-stroke:0.25px #0b4a7d;letter-spacing:-0.410px;">Besprec</div>
</div>
<div class="a" style="left:1087px;top:135px;width:320px;height:1px;background:#edebe9;"></div>
<div class="t sb" style="left:1103.4px;top:103px;font-size:16px;color:#201f1e;letter-spacing:-0.222px;">So, Dez. 19</div>
<svg style="left:1362.2px;top:106.6px" width="18" height="12" viewBox="0 0 18 12"><path d="M3.8 10.6 C1.6 10.6 0.5 9 0.5 7.4 C0.5 5.6 2 4.4 3.6 4.4 C4 4.4 4.2 4.4 4.4 4.5 C5 2 6.8 0.5 8.8 0.5 C11 0.5 12.4 2.2 12.8 4.4 C15 4.4 16.6 5.8 16.6 7.6 C16.6 9.4 15.2 10.6 13.6 10.6 Z" fill="none" stroke="#605e5c" stroke-width="1.05" stroke-linejoin="round"/></svg>
<div class="t" style="left:1386px;top:104px;font-size:12px;color:#484644;letter-spacing:-0.843px;">34°</div>
<div class="a" style="left:1102px;top:146px;width:6px;height:53px;background:#0078d4;border-radius:2px"></div>
<div class="t" style="left:1118.1px;top:153px;font-size:12px;color:#323130;letter-spacing:-0.467px;">09:30</div>
<div class="t" style="left:1118.1px;top:173px;font-size:12px;color:#605e5c;letter-spacing:0.048px;">30 Min</div>
<div class="t sb" style="left:1180.6px;top:151px;font-size:14px;color:#323130;letter-spacing:0.140px;">Druckvorlagen holen</div>
<div class="t" style="left:1180.6px;top:173px;font-size:12px;color:#484644;letter-spacing:-0.006px;">Druckerei Müller</div>
<div class="a" style="left:1087px;top:208px;width:320px;height:126px;background:#faf9f8;"></div>
<div class="a" style="left:1102px;top:220px;width:89px;height:24px;background:#0078d4;border-radius:12px"></div>
<svg style="left:1118px;top:226px" width="12" height="12" viewBox="0 0 12 12"><circle cx="6" cy="6" r="5.1" fill="none" stroke="#fff" stroke-width="1.1"/><path d="M6 3 V6.4 H8.6" fill="none" stroke="#fff" stroke-width="1.1"/></svg>
<div class="t sb" style="left:1134px;top:223px;font-size:12px;color:#fff;letter-spacing:0.135px;">in 4 Min</div>
<div class="a" style="left:1102px;top:256px;width:289px;height:62px;background:#fff;border-radius:2px;box-shadow:0 1.6px 3.6px rgba(0,0,0,0.13),0 0.3px 0.9px rgba(0,0,0,0.10)"></div>
<div class="a" style="left:1102px;top:256px;width:6px;height:62px;background:#0078d4;border-radius:2px 0 0 2px"></div>
<div class="t" style="left:1118.1px;top:272px;font-size:12px;color:#323130;letter-spacing:-0.467px;">15:00</div>
<div class="t" style="left:1118.1px;top:292px;font-size:12px;color:#605e5c;letter-spacing:0.048px;">30 Min</div>
<svg style="left:1180px;top:271px" width="16" height="14" viewBox="0 0 16 14"><path d="M3.4 7 H1 V1 H9.8 V3.2" fill="none" stroke="#0078d4" stroke-width="1.15"/><path d="M1.2 7 L1.2 9.8 L4 7" fill="none" stroke="#0078d4" stroke-width="1.15"/><path d="M5 3.6 H14.6 V10.2 H13 V13.2 L10 10.2 H5 Z" fill="none" stroke="#0078d4" stroke-width="1.15" stroke-linejoin="round"/></svg>
<div class="t" style="left:1200.6px;top:270px;font-size:16px;color:#0078d4;-webkit-text-stroke:0.25px #0078d4;letter-spacing:-0.041px;">Besprechung Layout</div>
<div class="t" style="left:1180.6px;top:292px;font-size:12px;color:#484644;letter-spacing:-0.350px;">Büro 411</div>
<div class="a" style="left:1087px;top:704px;width:320px;height:1px;background:#edebe9;"></div>
<svg style="left:1103px;top:720px" width="16" height="9" viewBox="0 0 16 9"><rect x="0.5" y="0.5" width="15" height="8" fill="none" stroke="#0078d4" stroke-width="1"/><path d="M11.5 0.5 V8.5" stroke="#0078d4" stroke-width="1"/><path d="M4.8 4.5 H10 M7.9 2.4 L10 4.5 L7.9 6.6" fill="none" stroke="#0078d4" stroke-width="1.1"/></svg>
</body></html>
